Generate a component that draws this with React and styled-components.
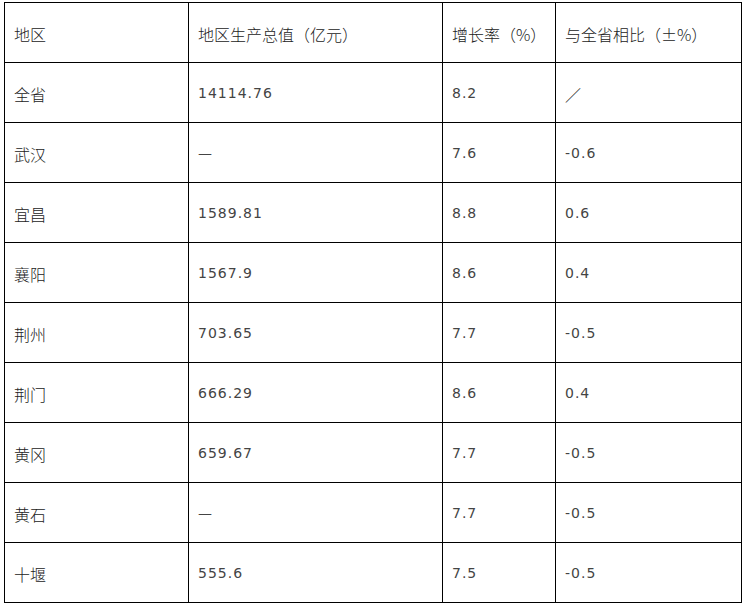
import React from "react";
import styled, { createGlobalStyle } from "styled-components";

const Global = createGlobalStyle`
  html, body { margin: 0; padding: 0; background: #fff; }
`;

const Page = styled.div`
  padding: 2px 0 0 4px;
`;

const Table = styled.table`
  border-collapse: collapse;
  width: 737px;
  table-layout: fixed;
  color: #333;
`;

const Cell = styled.td`
  border: 1px solid #000;
  height: 60px;
  padding: ${(p) => (p.$num ? "0 0 0 9px" : "2px 0 0 9px")};
  box-sizing: border-box;
  vertical-align: middle;
  white-space: nowrap;
  text-spacing-trim: space-all;
  font-size: ${(p) => (p.$num ? "14px" : "16px")};
  letter-spacing: ${(p) => (p.$num ? "1px" : "0")};
  font-weight: ${(p) => (p.$num ? 400 : 300)};
  font-family: ${(p) =>
    p.$num
      ? `"DejaVu Sans", "Noto Sans CJK SC", sans-serif`
      : `"Noto Sans CJK SC", "DejaVu Sans", sans-serif`};
  color: ${(p) => (p.$num ? "#444" : "#222")};
`;

const cols = [184, 254, 113, 186];

const rows = [
  ["地区", "地区生产总值（亿元）", "增长率（%）", "与全省相比（±%）"],
  ["全省", "14114.76", "8.2", "／"],
  ["武汉", "—", "7.6", "-0.6"],
  ["宜昌", "1589.81", "8.8", "0.6"],
  ["襄阳", "1567.9", "8.6", "0.4"],
  ["荆州", "703.65", "7.7", "-0.5"],
  ["荆门", "666.29", "8.6", "0.4"],
  ["黄冈", "659.67", "7.7", "-0.5"],
  ["黄石", "—", "7.7", "-0.5"],
  ["十堰", "555.6", "7.5", "-0.5"],
];

const isNum = (s) => /^[-0-9.—]+$/.test(s);

export default function App() {
  return (
    <Page>
      <Global />
      <Table>
        <colgroup>
          {cols.map((w, i) => (
            <col key={i} style={{ width: w }} />
          ))}
        </colgroup>
        <tbody>
          {rows.map((r, i) => (
            <tr key={i}>
              {r.map((c, j) => (
                <Cell key={j} $num={isNum(c)}>
                  {c}
                </Cell>
              ))}
            </tr>
          ))}
        </tbody>
      </Table>
    </Page>
  );
}
